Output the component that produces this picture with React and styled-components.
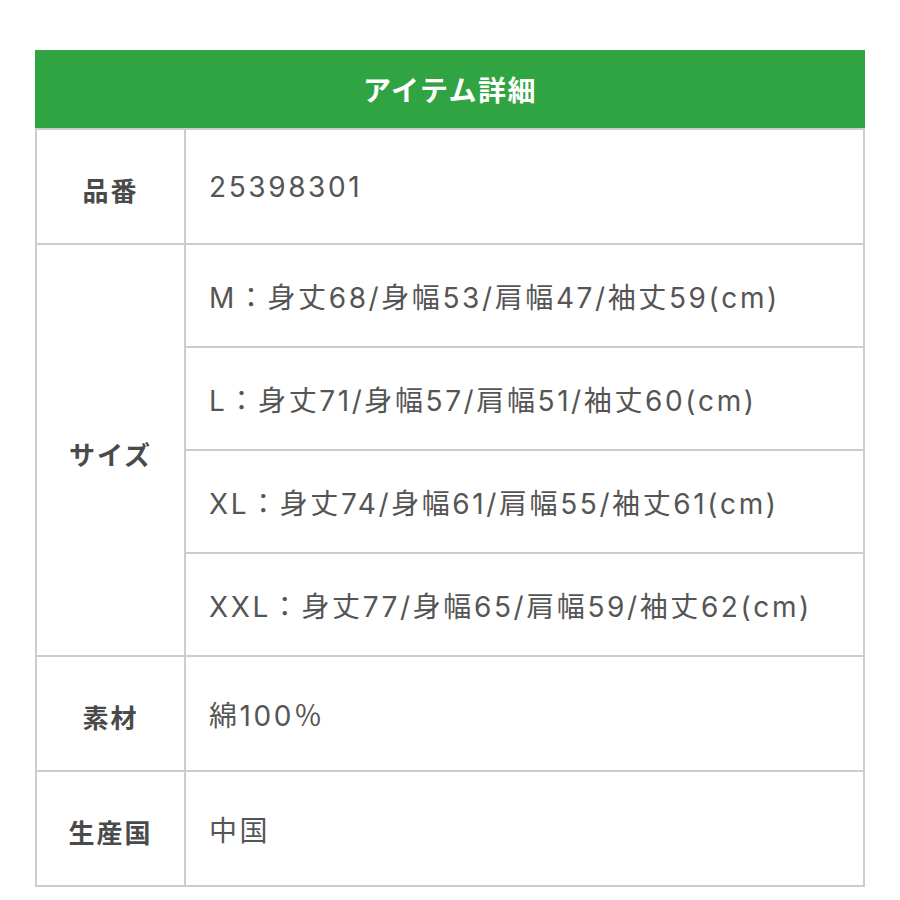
import React from "react";
import styled, { createGlobalStyle } from "styled-components";

const GlobalStyle = createGlobalStyle`
  html, body {
    margin: 0;
    padding: 0;
    background: #fff;
  }
  body {
    font-family: Inter, "Noto Sans CJK JP", sans-serif;
    color: #555;
  }
`;

const Page = styled.div`
  padding: 50px 35px;
  width: 830px;
`;

const Header = styled.div`
  height: 78px;
  background: #30a442;
  color: #fff;
  display: flex;
  align-items: center;
  justify-content: center;
  font-family: "Noto Sans CJK JP", sans-serif;
  font-weight: 700;
  font-size: 28px;
  letter-spacing: 1.5px;
`;

const Body = styled.div`
  border: 2px solid #cccccc;
`;

const Row = styled.div`
  display: grid;
  grid-template-columns: 149px 1fr;
  & + & {
    border-top: 2px solid #cccccc;
  }
`;

const Label = styled.div`
  border-right: 2px solid #cccccc;
  display: flex;
  align-items: center;
  justify-content: center;
  padding-top: 6px;
  font-family: "Noto Sans CJK JP", sans-serif;
  font-weight: 700;
  font-size: 26px;
  letter-spacing: 2px;
  color: #4a4a4a;
`;

const Values = styled.div`
  display: flex;
  flex-direction: column;
`;

const Value = styled.div`
  height: ${(p) => p.h}px;
  display: flex;
  align-items: center;
  padding-left: 23px;
  font-size: 28px;
  letter-spacing: 2.6px;
  color: #555;
  & + & {
    border-top: 2px solid #cccccc;
  }
`;

const items = [
  { label: "品番", values: ["25398301"] },
  {
    label: "サイズ",
    values: [
      "M：身丈68/身幅53/肩幅47/袖丈59(cm)",
      "L：身丈71/身幅57/肩幅51/袖丈60(cm)",
      "XL：身丈74/身幅61/肩幅55/袖丈61(cm)",
      "XXL：身丈77/身幅65/肩幅59/袖丈62(cm)",
    ],
  },
  { label: "素材", values: ["綿100％"] },
  { label: "生産国", values: ["中国"] },
];

export default function App() {
  return (
    <>
      <GlobalStyle />
      <Page>
        <Header>アイテム詳細</Header>
        <Body>
          {items.map((item) => (
            <Row key={item.label}>
              <Label>{item.label}</Label>
              <Values>
                {item.values.map((v) => (
                  <Value key={v} h={item.values.length > 1 ? 101 : 113}>
                    {v}
                  </Value>
                ))}
              </Values>
            </Row>
          ))}
        </Body>
      </Page>
    </>
  );
}
